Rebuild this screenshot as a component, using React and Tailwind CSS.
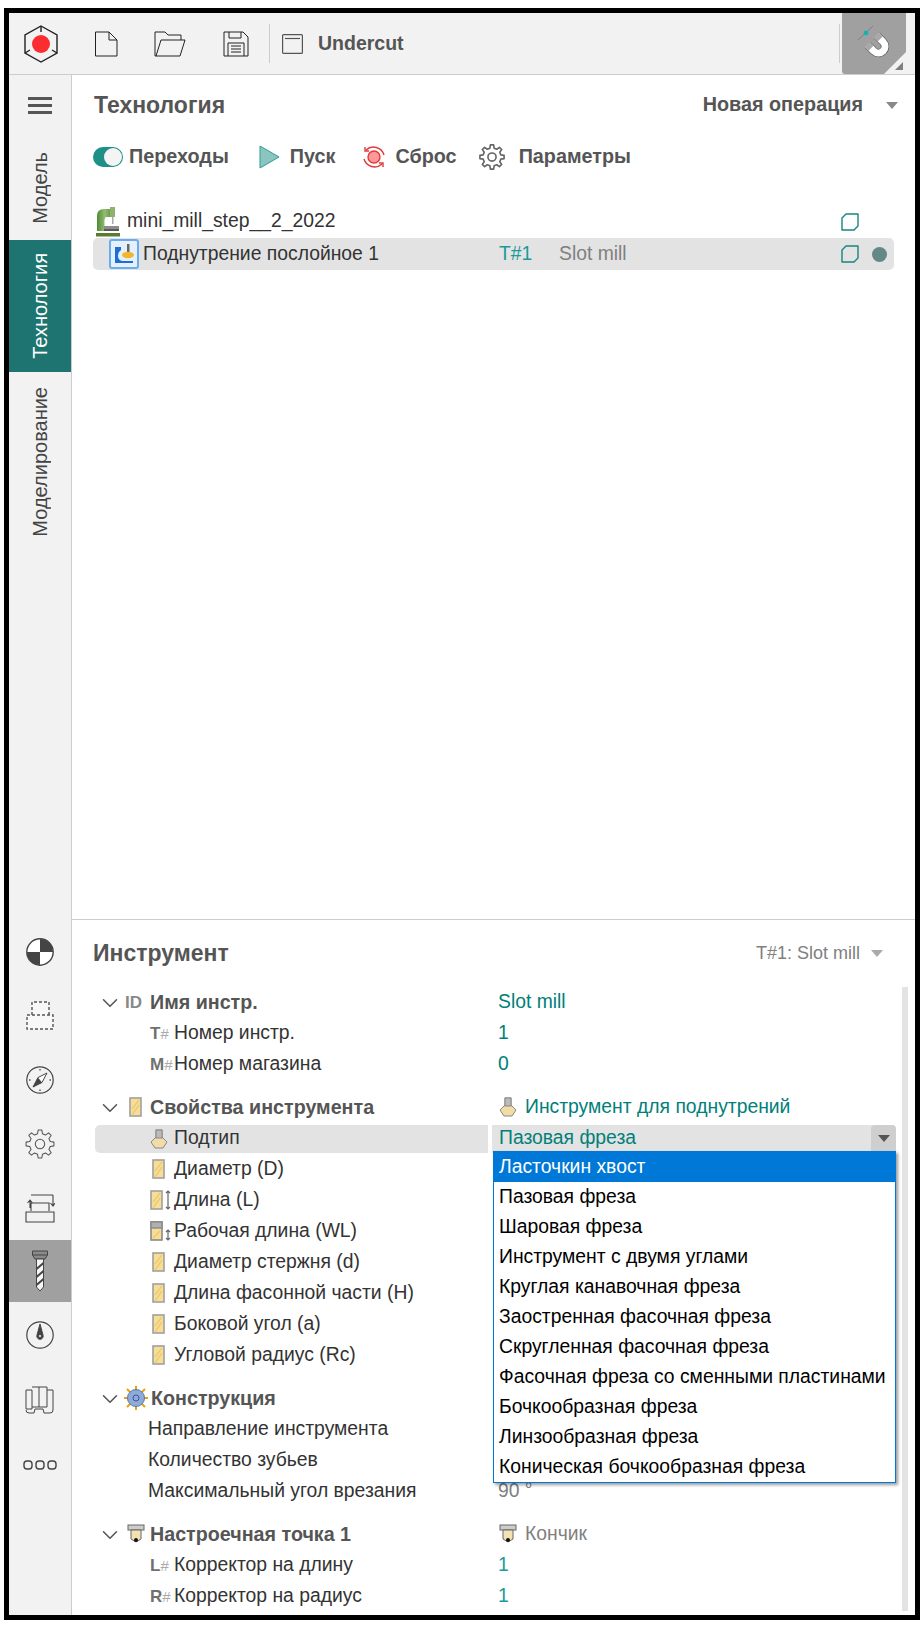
import { ChevronDown } from 'lucide-react'

const font = 'font-["Liberation_Sans",Arial,sans-serif]'

function Tri({ className = '' }) {
  return <span className={`block w-0 h-0 border-l-[6px] border-r-[6px] border-t-[7px] border-l-transparent border-r-transparent ${className}`} />
}

function Logo() {
  return (
    <svg width="38" height="40" viewBox="0 0 38 40" fill="none" stroke="#222" strokeWidth="1.4">
      <path d="M19 2 L35 11 V29 L19 38 L3 29 V11 Z" />
      <path d="M19 2 V8 M35 29 L30 26 M3 29 L8 26" />
      <circle cx="19" cy="20" r="9" fill="#fb2d30" stroke="none" />
    </svg>
  )
}

function FileIcon() {
  return (
    <svg width="24" height="26" viewBox="0 0 24 26" fill="none" stroke="#222" strokeWidth="1">
      <path d="M1.5 1 H15 L23 9 V25 H1.5 Z M15 1 V9 H23" />
    </svg>
  )
}

function FolderIcon() {
  return (
    <svg width="32" height="26" viewBox="0 0 32 26" fill="none" stroke="#222" strokeWidth="1">
      <path d="M1 25 V1 H11 L14 4 H27 V9 M1 25 H26 L31 9 H7 L2 25" />
    </svg>
  )
}

function SaveIcon() {
  return (
    <svg width="26" height="26" viewBox="0 0 26 26" fill="none" stroke="#222" strokeWidth="1">
      <path d="M1 1 H20 L25 6 V25 H1 Z M6 1 V7 H18 V1 M5 25 V12 H21 V25 M8 15 H18 M8 18 H18 M8 21 H18" />
    </svg>
  )
}

function WindowIcon() {
  return (
    <svg width="21" height="20" viewBox="0 0 21 20" fill="none" stroke="#555" strokeWidth="1.2">
      <rect x="0.6" y="0.6" width="19.8" height="18.8" rx="1" />
      <path d="M3 4.5 H18" />
    </svg>
  )
}

function Magnet() {
  const u = 'M11.5 19.7 L17.9 26.1 A6.5 6.5 0 0 0 27.1 16.9 L20.7 10.5'
  return (
    <svg width="36" height="36" viewBox="0 0 36 36" fill="none">
      <path d="M2 15 L17 1" stroke="#777" strokeWidth="0.8" />
      <circle cx="10" cy="8" r="2.4" fill="#12b5ae" />
      <path d={u} stroke="#666" strokeWidth="8.4" />
      <path d={u} stroke="#fff" strokeWidth="7" />
      <path d="M11.5 19.7 L15 23.2 M20.7 10.5 L24.2 14" stroke="#a8a8a8" strokeWidth="7" />
    </svg>
  )
}

// cog outline, teeth are worked out from the angle step
function cogPath(n, outer, inner) {
  const step = (Math.PI * 2) / n
  const pts = []
  for (let i = 0; i < n; i++) {
    const a = i * step - Math.PI / 2
    const p = (r, d) => `${(16 + r * Math.cos(a + d * step)).toFixed(2)} ${(16 + r * Math.sin(a + d * step)).toFixed(2)}`
    pts.push(p(inner, -0.3), p(outer, -0.17), p(outer, 0.17), p(inner, 0.3))
  }
  return `M${pts.join(' L')} Z`
}

function Gear({ size = 26, color = '#555', width = 1.3 }) {
  return (
    <svg width={size} height={size} viewBox="0 0 32 32" fill="none" stroke={color} strokeWidth={width} strokeLinejoin="round">
      <path d={cogPath(8, 15, 11.2)} />
      <circle cx="16" cy="16" r="5" />
    </svg>
  )
}

function ToolBar({ w = 13, h = 20 }) {
  return (
    <svg width={w} height={h} viewBox="0 0 13 20">
      <rect x="1" y="1" width="11" height="18" fill="#f7dd95" stroke="#a0a0a0" strokeWidth="1.6" />
      <path d="M3 12 L10 3 M3 18 L10 8" stroke="#eacb75" strokeWidth="1.4" />
    </svg>
  )
}

function WorkBar() {
  return (
    <svg width="13" height="20" viewBox="0 0 13 20">
      <rect x="1" y="1" width="11" height="18" fill="#f7dd95" stroke="#8a8a8a" strokeWidth="1.6" />
      <rect x="1" y="1" width="11" height="6" fill="#b0b0b0" stroke="#8a8a8a" strokeWidth="1.4" />
      <path d="M3 17 L10 10" stroke="#eacb75" strokeWidth="1.4" />
    </svg>
  )
}

function UpDown({ h = 20 }) {
  return (
    <svg width="6" height={h} viewBox={`0 0 6 ${h}`} fill="none" stroke="#666" strokeWidth="1.2">
      <path d={`M3 1 V${h - 1} M1 3 L3 1 L5 3 M1 ${h - 3} L3 ${h - 1} L5 ${h - 3}`} />
    </svg>
  )
}

function SubtypeIcon({ stroke = '#888' }) {
  return (
    <svg width="18" height="20" viewBox="0 0 18 20">
      <path d="M6 1 H12 V8 L17 13 L13 19 H5 L1 13 L6 8 Z" fill="#f1dca8" stroke={stroke} />
      <rect x="6" y="1" width="6" height="8" fill="#bbb" stroke={stroke} />
    </svg>
  )
}

function SetupIcon() {
  return (
    <svg width="18" height="21" viewBox="0 0 18 21">
      <rect x="1" y="1" width="16" height="5" fill="#ccc" stroke="#666" />
      <path d="M4 6 H14 V15 L9 18 L4 15 Z" fill="#f4e2b4" stroke="#666" />
      <circle cx="9" cy="16" r="2" fill="#111" />
    </svg>
  )
}

function BigGear() {
  return (
    <svg width="24" height="24" viewBox="0 0 24 24">
      <g stroke="#eaa400" strokeWidth="2">
        <path d="M12 0 V4 M12 20 V24 M0 12 H4 M20 12 H24 M3 3 L6 6 M18 18 L21 21 M3 21 L6 18 M18 6 L21 3" />
      </g>
      <circle cx="12" cy="12" r="8.5" fill="#8eaadb" stroke="#5878ad" />
      <circle cx="12" cy="12" r="3" fill="#8eaadb" stroke="#39598c" />
    </svg>
  )
}

function MillIcon() {
  return (
    <svg width="24" height="30" viewBox="0 0 24 30">
      <defs>
        <linearGradient id="mill" x1="0" y1="0" x2="1" y2="0">
          <stop offset="0" stopColor="#4f8a35" />
          <stop offset="0.6" stopColor="#93bd73" />
          <stop offset="1" stopColor="#6e9c4e" />
        </linearGradient>
      </defs>
      <path d="M1 29 V9 Q1 2 8 2 H14 V10 H10 Q9 10 8.5 13 V24 H1 Z" fill="url(#mill)" />
      <rect x="14" y="0" width="5" height="10" fill="#8db36f" />
      <rect x="16" y="10" width="1.5" height="7" fill="#aaa" />
      <rect x="8" y="19" width="15" height="3" fill="#8c8c8c" />
      <rect x="8" y="22" width="15" height="2" fill="#5a5a5a" />
      <rect x="0" y="26" width="24" height="3.5" fill="#5a7a30" />
    </svg>
  )
}

function Code({ a, b = '#' }) {
  return (
    <span className="w-[23px] flex items-center text-[17px] leading-none font-bold text-[#707070]">
      {a}<span className="font-normal text-[15px] text-[#aaa]">{b}</span>
    </span>
  )
}

function Row({ icon, label, value, bold, chevron, gapTop, valueClass = 'text-[#00807a]', labelLeft = 150 }) {
  return (
    <div className={`h-[31px] flex items-center shrink-0 ${gapTop ? 'mt-[12px]' : ''}`}>
      <div className="w-[399px] flex items-center relative shrink-0 h-full">
        {chevron && <ChevronDown size={26} strokeWidth={1.4} className="absolute left-[1px] text-[#555]" />}
        <div className="flex items-center" style={{ marginLeft: labelLeft - 95 - (icon ? 1 : 0) }}>
          {icon}
          <span className={bold ? 'font-bold text-[19.7px] text-[#555] ml-[1px]' : 'text-[#333] ml-[1px]'}>{label}</span>
        </div>
      </div>
      <div className={`pl-[3px] flex items-center gap-[8px] ${valueClass}`}>{value}</div>
    </div>
  )
}

const checker = (
  <svg width="28" height="28" viewBox="0 0 28 28">
    <circle cx="14" cy="14" r="13.2" fill="#fff" stroke="#444" strokeWidth="1.4" />
    <path d="M14 14 V1 A13 13 0 0 1 27 14 Z M14 14 V27 A13 13 0 0 1 1 14 Z" fill="#444" />
  </svg>
)

const sideIcons = [
  checker,
  <svg width="28" height="30" viewBox="0 0 28 30" fill="#f8f8f8" stroke="#555" strokeWidth="1.4" strokeDasharray="3 2"><path d="M6 14 V1 H23 V14" /><rect x="1" y="14" width="26" height="14" /></svg>,
  <svg width="28" height="28" viewBox="0 0 28 28"><circle cx="14" cy="14" r="13.2" fill="none" stroke="#444" strokeWidth="1.2" /><path d="M14 3 V4.5 M14 23.5 V25 M3 14 H4.5 M23.5 14 H25" stroke="#555" strokeWidth="1.4" /><path d="M21 7 L12 11.5 L7 21 L16 16.5 Z" fill="#fff" stroke="#444" /><path d="M7 21 L12 11.5 L16 16.5 Z" fill="#444" /></svg>,
  <Gear size={30} color="#555" width={1.1} />,
  <svg width="30" height="30" viewBox="0 0 30 30" fill="none" stroke="#444" strokeWidth="1.1"><path d="M6 2 H28 M5 7 V15 M2.5 10 L5 7 L7.5 10 M28 2 V13 M25.5 10 L28 13 L30 10 M6 18 V10 H24 V18 M1 19 H29 V29 H1 Z" /></svg>,
]

const sideIcons2 = [
  <svg width="28" height="28" viewBox="0 0 28 28" fill="none" stroke="#444"><circle cx="14" cy="14" r="13.2" strokeWidth="1.2" /><path d="M14 3 L17 14 A3.2 3.2 0 1 1 11 14 Z" fill="#444" /><circle cx="14" cy="15" r="1.5" fill="#fff" /></svg>,
  <svg width="30" height="30" viewBox="0 0 30 30" fill="none" stroke="#444"><path d="M1 5 H7 V24 H1 Z M7 2 H14 V22 H7 M14 2 H22 V22 H14 M22 5 H28 V25 Q28 28 25 28 H19 L18 24 H10 L9 28 H4 Q1 28 1 25" /></svg>,
  <svg width="34" height="12" viewBox="0 0 34 12" fill="none" stroke="#444" strokeWidth="1.4"><rect x="1" y="2" width="8" height="8" rx="3" /><rect x="13" y="2" width="8" height="8" rx="3" /><rect x="25" y="2" width="8" height="8" rx="3" /></svg>,
]

const options = ['Ласточкин хвост', 'Пазовая фреза', 'Шаровая фреза', 'Инструмент с двумя углами', 'Круглая канавочная фреза', 'Заостренная фасочная фреза', 'Скругленная фасочная фреза', 'Фасочная фреза со сменными пластинами', 'Бочкообразная фреза', 'Линзообразная фреза', 'Коническая бочкообразная фреза']

const vertical = '[writing-mode:vertical-rl] rotate-180 text-[20px]'
const squareIcon = 'M5 1 H17 V13 L13 17 H1 V5 Z'

export default function App() {
  return (
    <div className={`w-[922px] h-[1630px] bg-white pt-2 pl-1 pr-0.5 pb-2.5 text-[19.33px] ${font}`}>
      <div className="h-full border-[5px] border-black flex flex-col bg-[#f2f2f2] overflow-hidden">
        <header className="h-[62px] shrink-0 flex items-center relative border-b border-[#ccc]">
          <div className="ml-[13px]"><Logo /></div>
          <div className="ml-[34px]"><FileIcon /></div>
          <div className="ml-[36px]"><FolderIcon /></div>
          <div className="ml-[37px]"><SaveIcon /></div>
          <div className="ml-[20px] w-px h-[39px] bg-[#ccc]" />
          <div className="ml-[12px]"><WindowIcon /></div>
          <span className="ml-[15px] font-bold text-[19.5px] text-[#555]">Undercut</span>
          <div className="ml-auto w-px h-[39px] bg-[#ccc] mr-[2px]" />
          <div className="w-[64px] h-[61px] mr-[9px] bg-[#a0a0a0] rounded-bl-[3px] flex items-start justify-center pt-[12px] relative overflow-hidden">
            <Magnet />
            <div className="absolute right-0 bottom-0 w-0 h-0 border-b-[22px] border-l-[22px] border-l-transparent border-b-[#f2f2f2]" />
            <div className="absolute right-[3px] bottom-[4px] w-0 h-0 border-b-[8px] border-l-[8px] border-l-transparent border-b-[#808080]" />
          </div>
        </header>

        <div className="flex-1 flex min-h-0">
          <aside className="w-[62px] shrink-0 flex flex-col items-center text-[#444]">
            <div className="h-[60px] w-full flex flex-col items-center justify-center gap-[4px]">
              <span className="w-[24px] h-[3px] bg-[#555]" />
              <span className="w-[24px] h-[3px] bg-[#555]" />
              <span className="w-[24px] h-[3px] bg-[#555]" />
            </div>
            <div className="h-[105px] w-full flex items-center justify-center"><span className={vertical}>Модель</span></div>
            <div className="h-[132px] w-full bg-[#1e7470] text-white flex items-center justify-center"><span className={vertical}>Технология</span></div>
            <div className="h-[175px] w-full flex items-center justify-center pt-[4px]"><span className={vertical}>Моделирование</span></div>
            <div className="mt-auto w-full flex flex-col items-center pb-[118px]">
              {sideIcons.map((ic, i) => (
                <div key={i} className="h-[64.1px] flex items-center justify-center">{ic}</div>
              ))}
              <div className="h-[62px] w-full bg-[#a0a0a0] flex items-center justify-center">
                <svg width="18" height="42" viewBox="0 0 18 42" fill="none" stroke="#444">
                  <path d="M1.5 1 H16.5 V5 L14 9 H4 L1.5 5 Z M1.5 5 H16.5" fill="#8a8a8a" />
                  <path d="M5.5 9 H12.5 V37 L9 41 L5.5 37 Z" fill="#f5f5f5" />
                  <path d="M5.5 19 L12.5 13 M5.5 27 L12.5 21 M5.5 35 L12.5 29" strokeWidth="2" />
                </svg>
              </div>
              {sideIcons2.map((ic, i) => (
                <div key={i} className="h-[65px] w-full flex items-center justify-center">{ic}</div>
              ))}
            </div>
          </aside>

          <main className="flex-1 min-w-0 bg-white border-l border-[#ccc] flex flex-col">
            <section className="flex-1 min-h-0 pl-[21px] pr-[21px]">
              <div className="h-[60px] flex items-center justify-between pl-px">
                <h1 className="font-bold text-[23px] text-[#555]">Технология</h1>
                <div className="flex items-center font-bold text-[#555] text-[19.8px] -mr-[4px]">
                  <span>Новая операция</span>
                  <Tri className="ml-[23px] border-t-[#888]" />
                </div>
              </div>
              <div className="h-[44px] flex items-center font-bold text-[#555] text-[19.8px]">
                <span className="w-[30px] h-[20px] rounded-full bg-[#1e9088] relative shrink-0">
                  <span className="absolute right-[1px] top-[1px] w-[18px] h-[18px] rounded-full bg-[#f4f4f4]" />
                </span>
                <span className="ml-[6px]">Переходы</span>
                <svg className="ml-[30px]" width="21" height="24" viewBox="0 0 21 24"><path d="M1 1 L20 12 L1 23 Z" fill="#8cc5bf" stroke="#2e9d93" strokeLinejoin="round" /></svg>
                <span className="ml-[10px]">Пуск</span>
                <svg className="ml-[27px]" width="24" height="24" viewBox="0 0 24 24" fill="none" stroke="#e5383b" strokeWidth="1.4">
                  <path d="M4 5 A11 11 0 0 1 22 10 M20 19 A11 11 0 0 1 2 14" />
                  <path d="M3 2 V6 H7 M21 22 V18 H17" />
                  <circle cx="12" cy="12" r="6" fill="#f99" />
                </svg>
                <span className="ml-[9px]">Сброс</span>
                <span className="ml-[22px] flex"><Gear size={26} color="#666" width={2} /></span>
                <span className="ml-[14px]">Параметры</span>
              </div>
              <div className="mt-[26px] h-[33px] flex items-center pl-[3px]">
                <MillIcon />
                <span className="ml-[7px] text-[#333]">mini_mill_step__2_2022</span>
                <svg className="ml-auto mr-[35px]" width="18" height="18" viewBox="0 0 18 18" fill="none" stroke="#17857f" strokeWidth="1.4"><path d={squareIcon} strokeLinejoin="round" /></svg>
              </div>
              <div className="h-[32px] flex items-center bg-[#e3e3e3] rounded-[5px]">
                <span className="ml-[16px] w-[30px] h-[30px] border-2 border-[#6aacef] rounded-[3px] bg-[#e4f0fc] flex items-center justify-center shrink-0">
                  <svg width="24" height="24" viewBox="0 0 24 24">
                    <path d="M3 5 H9 V8 Q6 10 6 14 Q6 18 10 19 H21 V21 H3 Z" fill="#1d6fd6" />
                    <rect x="15" y="2" width="2.5" height="9" fill="#666" />
                    <ellipse cx="16" cy="13" rx="6" ry="3.2" fill="#f2b62c" />
                  </svg>
                </span>
                <span className="ml-[4px] w-[356px] text-[#333]">Поднутрение послойное 1</span>
                <span className="w-[60px] text-[#1b9a9a]">T#1</span>
                <span className="text-[#808080]">Slot mill</span>
                <svg className="ml-auto mr-[13px]" width="18" height="18" viewBox="0 0 18 18" fill="none" stroke="#17857f" strokeWidth="1.4"><path d={squareIcon} strokeLinejoin="round" /></svg>
                <span className="w-[15px] h-[15px] rounded-full bg-[#648787] mr-[7px]" />
              </div>
            </section>

            <section className="h-[696px] shrink-0 border-t border-[#ccc] flex flex-col relative overflow-hidden">
              <div className="h-[66px] shrink-0 pl-[21px] pr-[32px] flex items-center justify-between">
                <h2 className="font-bold text-[23px] text-[#555]">Инструмент</h2>
                <div className="flex items-center text-[18px] text-[#808080]">
                  <span>T#1: Slot mill</span>
                  <Tri className="ml-[11px] border-t-[#aaa]" />
                </div>
              </div>
              <div className="absolute right-[7px] top-[67px] bottom-[4px] w-[6px] bg-[#e3e3e3]" />
              <div className="flex flex-col pl-[24px] mt-px">
                <Row chevron bold label="Имя инстр." labelLeft={125} icon={<span className="w-[24px] font-bold text-[#888] text-[17px]">ID</span>} value="Slot mill" />
                <Row label="Номер инстр." icon={<Code a="T" />} value="1" />
                <Row label="Номер магазина" icon={<Code a="M" />} value="0" />
                <Row gapTop chevron bold label="Свойства инструмента" labelLeft={129} icon={<span className="w-[20px]"><ToolBar /></span>} value={<><span className="ml-px"><SubtypeIcon /></span><span>Инструмент для поднутрений</span></>} />
                <div className="h-[31px] flex items-center shrink-0 -ml-px">
                  <div className="w-[393px] h-[28px] bg-[#e3e3e3] rounded-l-[5px] flex items-center pl-[55px]">
                    <SubtypeIcon />
                    <span className="ml-[6px] text-[#333]">Подтип</span>
                  </div>
                  <div className="ml-[4px] w-[404px] h-[28px] bg-[#e3e3e3] flex items-center pl-[7px] text-[#00807a] relative rounded-r-[5px]">
                    Пазовая фреза
                    <span className="absolute right-0 top-0 w-[25px] h-[28px] bg-[#cfcfcf] rounded-[4px] flex items-center justify-center">
                      <Tri className="border-t-[#555]" />
                    </span>
                  </div>
                </div>
                <Row label="Диаметр (D)" labelLeft={152} icon={<span className="w-[21px]"><ToolBar /></span>} />
                <Row label="Длина (L)" labelLeft={150} icon={<span className="w-[23px] flex items-center gap-[2px]"><ToolBar /><UpDown /></span>} />
                <Row label="Рабочая длина (WL)" labelLeft={150} icon={<span className="w-[23px] flex items-center gap-[2px]"><WorkBar /><span className="mt-[8px] flex"><UpDown h={12} /></span></span>} />
                <Row label="Диаметр стержня (d)" labelLeft={152} icon={<span className="w-[21px]"><ToolBar /></span>} />
                <Row label="Длина фасонной части (H)" labelLeft={152} icon={<span className="w-[21px]"><ToolBar /></span>} />
                <Row label="Боковой угол (a)" labelLeft={152} icon={<span className="w-[21px]"><ToolBar /></span>} />
                <Row label="Угловой радиус (Rc)" labelLeft={152} icon={<span className="w-[21px]"><ToolBar /></span>} />
                <Row gapTop chevron bold label="Конструкция" labelLeft={124} icon={<span className="w-[26px]"><BigGear /></span>} />
                <Row label="Направление инструмента" labelLeft={146} />
                <Row label="Количество зубьев" labelLeft={146} />
                <Row label="Максимальный угол врезания" labelLeft={146} value="90 °" valueClass="text-[#808080]" />
                <Row gapTop chevron bold label="Настроечная точка 1" labelLeft={127} icon={<span className="w-[22px]"><SetupIcon /></span>} value={<><span className="ml-px"><SetupIcon /></span><span>Кончик</span></>} valueClass="text-[#808080]" />
                <Row label="Корректор на длину" icon={<Code a="L" />} value="1" valueClass="text-[#1b9a9a]" />
                <Row label="Корректор на радиус" icon={<Code a="R" />} value="1" valueClass="text-[#1b9a9a]" />
              </div>

              <ul className="absolute left-[421px] top-[231px] w-[403px] border border-[#0078d7] bg-white shadow-[2px_2px_3px_rgba(0,0,0,0.4)]">
                {options.map((o, i) => (
                  <li key={o} className={`h-[30px] flex items-center pl-[5px] ${i === 0 ? 'bg-[#0078d7] text-white' : 'text-black'}`}>{o}</li>
                ))}
              </ul>
            </section>
          </main>
        </div>
      </div>
    </div>
  )
}
